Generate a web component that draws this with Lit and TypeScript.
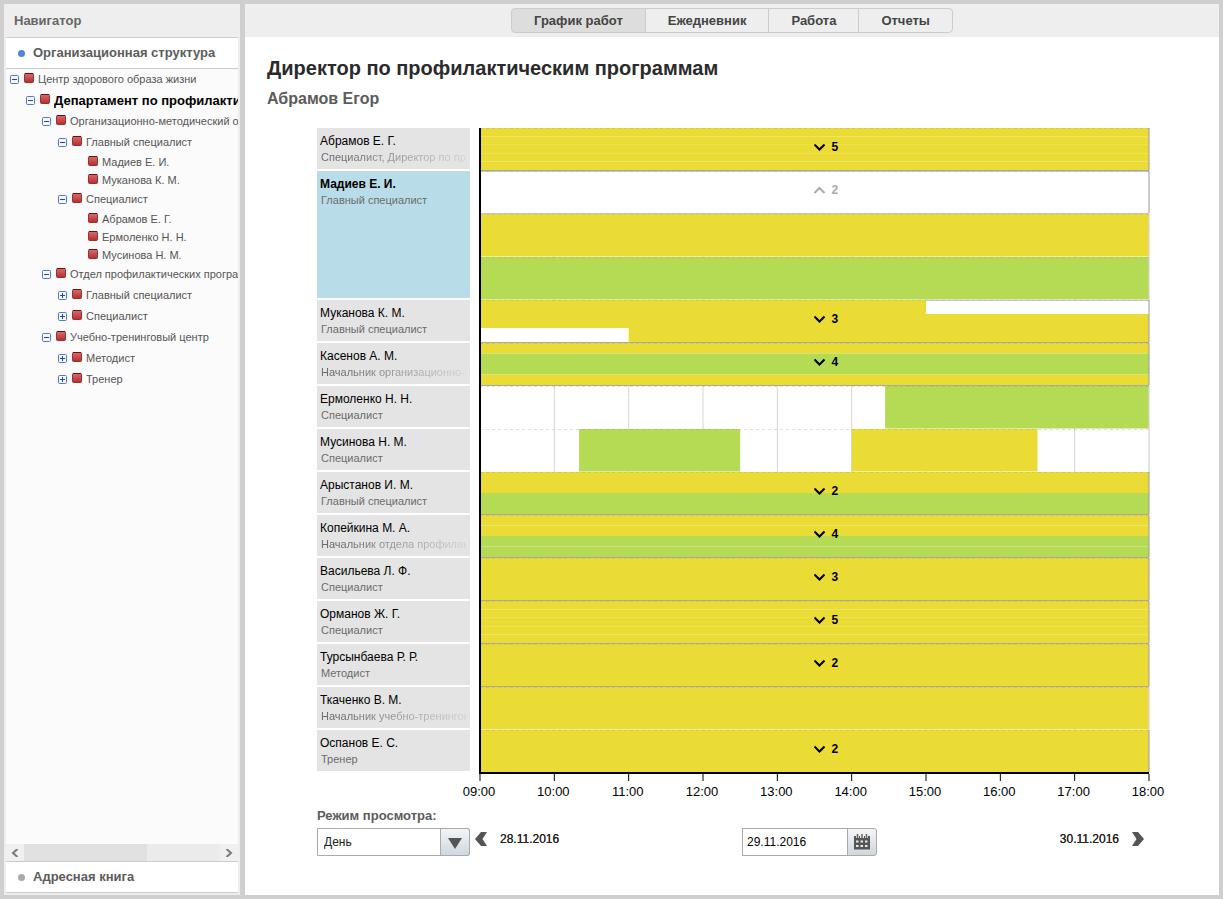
import { LitElement, css, html, svg, nothing } from "lit";
import { customElement } from "lit/decorators.js";
import { classMap } from "lit/directives/class-map.js";

interface TreeNode {
  label: string;
  current?: boolean;
  open?: boolean;
  children?: TreeNode[];
}

type Tone = "yellow" | "green";

interface Work {
  tone: Tone;
  from?: number;
  to?: number;
}

interface Person {
  name: string;
  role: string;
  longRole?: boolean;
  selected?: boolean;
  lanes: Work[][];
}

const DAY_START = 9;
const DAY_END = 18;
const HOURS = DAY_END - DAY_START;
const LANE = 43;

const branch = (label: string, children: TreeNode[] = [], open = true): TreeNode => ({ label, children, open });

const TREE: TreeNode = branch("Центр здорового образа жизни", [
  {
    label: "Департамент по профилактическим программам",
    current: true,
    open: true,
    children: [
      branch("Организационно-методический отдел", [
        branch("Главный специалист", [{ label: "Мадиев Е. И." }, { label: "Муканова К. М." }]),
        branch("Специалист", [{ label: "Абрамов Е. Г." }, { label: "Ермоленко Н. Н." }, { label: "Мусинова Н. М." }]),
      ]),
      branch("Отдел профилактических программ", [
        branch("Главный специалист", [], false),
        branch("Специалист", [], false),
      ]),
      branch("Учебно-тренинговый центр", [branch("Методист", [], false), branch("Тренер", [], false)]),
    ],
  },
]);

const full = (...tones: Tone[]): Work[][] => tones.map((tone) => [{ tone }]);
const y: Tone = "yellow";
const g: Tone = "green";

const PEOPLE: Person[] = [
  { name: "Абрамов Е. Г.", role: "Специалист, Директор по профилактическим программам", longRole: true, lanes: full(y, y, y, y, y) },
  { name: "Мадиев Е. И.", role: "Главный специалист", selected: true, lanes: full(y, g) },
  { name: "Муканова К. М.", role: "Главный специалист", lanes: [[{ tone: y, to: 15 }], [{ tone: y }], [{ tone: y, from: 11 }]] },
  { name: "Касенов А. М.", role: "Начальник организационно-методического отдела", longRole: true, lanes: full(y, g, g, y) },
  { name: "Ермоленко Н. Н.", role: "Специалист", lanes: [[{ tone: g, from: 14.45 }]] },
  { name: "Мусинова Н. М.", role: "Специалист", lanes: [[{ tone: g, from: 10.333, to: 12.5 }, { tone: y, from: 14, to: 16.5 }]] },
  { name: "Арыстанов И. М.", role: "Главный специалист", lanes: full(y, g) },
  { name: "Копейкина М. А.", role: "Начальник отдела профилактических программ", longRole: true, lanes: full(y, y, g, g) },
  { name: "Васильева Л. Ф.", role: "Специалист", lanes: full(y, y, y) },
  { name: "Орманов Ж. Г.", role: "Специалист", lanes: full(y, y, y, y, y) },
  { name: "Турсынбаева Р. Р.", role: "Методист", lanes: full(y, y) },
  { name: "Ткаченко В. М.", role: "Начальник учебно-тренингового центра", longRole: true, lanes: full(y) },
  { name: "Оспанов Е. С.", role: "Тренер", lanes: full(y, y) },
];

const pct = (hour: number) => `${((hour - DAY_START) / HOURS) * 100}%`;
const span = (from: number, to: number) => `${((to - from) / HOURS) * 100}%`;

@customElement("org-navigator")
export class OrgNavigator extends LitElement {
  static styles = css`
    :host {
      display: flex;
      flex-direction: column;
      min-height: 0;
      background: #eee;
      padding: 0 2px 2px;
      font: 11px/18px "Liberation Sans", Arial, sans-serif;
      color: #555;
    }
    .title {
      margin: 0;
      padding-left: 8px;
      font-size: 13px;
      line-height: 33px;
      font-weight: bold;
      color: #666;
    }
    .section {
      display: flex;
      align-items: center;
      gap: 8px;
      box-sizing: border-box;
      height: 32px;
      flex: none;
      width: 100%;
      padding: 0 0 0 12px;
      border: 0;
      border-top: 1px solid #ccc;
      border-bottom: 1px solid #ccc;
      background: #fff;
      font: bold 13px/30px "Liberation Sans", Arial, sans-serif;
      color: #5c5c5c;
      text-align: left;
    }
    .dot {
      width: 7px;
      height: 7px;
      border-radius: 50%;
      background: #aaa;
    }
    .dot.on {
      background: #4d87d6;
    }
    .tree {
      flex: 1;
      min-height: 0;
      overflow: hidden;
      background: #fbfbfb;
    }
    ul {
      margin: 0;
      padding: 0 0 0 16px;
      list-style: none;
    }
    .tree > ul {
      padding-left: 4px;
    }
    .node {
      display: flex;
      align-items: center;
      height: 18px;
      white-space: nowrap;
    }
    .node.parent {
      height: 21px;
    }
    .node.leaf {
      padding-left: 14px;
    }
    .label {
      min-width: 0;
      overflow: hidden;
    }
    .parent .label {
      padding-bottom: 2px;
    }
    .node.current {
      font-size: 13px;
      font-weight: bold;
      color: #000;
    }
    .current .label {
      padding-bottom: 0;
    }
    .toggle {
      display: block;
      width: 9px;
      height: 9px;
      flex: none;
      margin-right: 5px;
      padding: 0;
      border: 0;
      background: none;
    }
    .toggle svg,
    .mark {
      display: block;
    }
    .mark {
      flex: none;
      margin: 0 4px 3px 0;
    }
    .scroll {
      display: flex;
      height: 17px;
      flex: none;
      background: #ebebeb;
    }
    .scroll button {
      display: grid;
      place-items: center;
      width: 18px;
      padding: 0;
      border: 0;
      background: #f0f0f0;
    }
    .track {
      flex: 1;
    }
    .thumb {
      width: 63%;
      height: 100%;
      background: #e1e1e1;
    }
  `;

  private toggle(open: boolean) {
    return html`<button class="toggle" aria-label=${open ? "Свернуть" : "Развернуть"}>
      <svg width="9" height="9" viewBox="0 0 9 9">
        <rect x=".5" y=".5" width="8" height="8" rx="1" fill="#f5f8ff" stroke="#5577cf" />
        <path d=${open ? "M2 4.500h5" : "M2 4.500h5M4.500 2v5"} stroke="#2547b5" />
      </svg>
    </button>`;
  }

  private node(n: TreeNode): unknown {
    const parent = !!n.children;
    return html`<li>
      <div class=${classMap({ node: true, parent, leaf: !parent, current: !!n.current })}>
        ${parent ? this.toggle(!!n.open) : nothing}
        <svg class="mark" width="10" height="10" viewBox="0 0 10 10">
          <defs>
            <linearGradient id="red" x1="0" y1="0" x2="0" y2="1">
              <stop offset="0" stop-color="#dc6b6b" />
              <stop offset="1" stop-color="#b02e30" />
            </linearGradient>
          </defs>
          <rect x=".5" y=".5" width="9" height="9" rx="1" fill="url(#red)" stroke="#9c2f31" />
          <path d="M1 .5h8" stroke="#5a1518" />
        </svg>
        <span class="label">${n.label}</span>
      </div>
      ${n.children?.length ? html`<ul>${n.children.map((c) => this.node(c))}</ul>` : nothing}
    </li>`;
  }

  render() {
    const arrow = (d: string) => html`<svg width="8" height="8" viewBox="0 0 8 8"><path d=${d} fill="none" stroke="#7a7a7a" stroke-width="2" /></svg>`;
    return html`
      <h2 class="title">Навигатор</h2>
      <button class="section"><span class="dot on"></span>Организационная структура</button>
      <nav class="tree"><ul>${this.node(TREE)}</ul></nav>
      <div class="scroll">
        <button aria-label="Влево">${arrow("M6.500 0 2 4l4.500 4")}</button>
        <div class="track"><div class="thumb"></div></div>
        <button aria-label="Вправо">${arrow("M1.500 0 6 4 1.500 8")}</button>
      </div>
      <button class="section"><span class="dot"></span>Адресная книга</button>
    `;
  }
}

@customElement("work-chart")
export class WorkChart extends LitElement {
  static styles = css`
    :host {
      display: block;
      font: 12px/16px "Liberation Sans", Arial, sans-serif;
      color: #000;
    }
    .board {
      display: grid;
      grid-template-columns: 153px 1fr;
      column-gap: 10px;
    }
    .person {
      box-sizing: border-box;
      margin-bottom: 2px;
      padding: 5px 4px 0 3px;
      background: #e4e4e4;
    }
    .person.selected {
      background: #b9dde8;
    }
    .selected .name {
      font-weight: bold;
    }
    .role {
      margin-left: 1px;
      overflow: hidden;
      white-space: nowrap;
      font-size: 11px;
      color: #6c6c6c;
    }
    .role.long {
      -webkit-mask-image: linear-gradient(90deg, #000 10%, rgba(0, 0, 0, 0.12));
      mask-image: linear-gradient(90deg, #000 10%, rgba(0, 0, 0, 0.12));
    }
    .lane {
      display: grid;
      height: 43px;
    }
    .lane > * {
      grid-area: 1 / 1;
    }
    .plot {
      display: block;
      width: 100%;
      height: 43px;
      overflow: visible;
    }
    .yellow {
      fill: #eadb35;
    }
    .green {
      fill: #b5da54;
    }
    .more {
      display: flex;
      align-items: center;
      justify-self: start;
      align-self: start;
      gap: 7px;
      margin: 11px 0 0 calc(50% - 1px);
      padding: 0;
      border: 0;
      background: none;
      font: bold 12px/16px "Liberation Sans", Arial, sans-serif;
      color: #000;
    }
    .more.open {
      color: #aaa;
    }
    .axis {
      grid-column: 2;
      height: 28px;
    }
    .rule {
      display: block;
      width: 100%;
      height: 10px;
      overflow: visible;
    }
    .hours {
      display: flex;
      justify-content: space-between;
      margin: 0 1px 0 -1px;
      font-size: 13px;
      line-height: 18px;
    }
    .hours span {
      display: flex;
      justify-content: center;
      width: 0;
    }
  `;

  private hourLines() {
    return Array.from({ length: HOURS }, (_, i) => {
      const x = pct(DAY_START + i + 1);
      return svg`<line x1=${x} x2=${x} y1="0" y2=${LANE} stroke="#d6d6d6" />`;
    });
  }

  private bars(rows: Work[][]) {
    const h = rows.length > 1 ? (LANE - 1) / rows.length : LANE - 0.5;
    return rows.flatMap((row, i) =>
      row.map(({ tone, from = DAY_START, to = DAY_END }) =>
        svg`<rect class=${tone} x=${pct(from)} y=${i * h} width=${span(from, to)} height=${h} />`));
  }

  private lane(rows: Work[][], grouped: boolean, count?: number, open = false) {
    return html`<div class="lane">
      <svg class="plot">
        ${grouped ? svg`<line x1="0" x2="100%" y1=".5" y2=".5" stroke="#ccc" />` : this.hourLines()}
        ${this.bars(rows)}
        ${grouped
          ? svg`<line x1="0" x2="100%" y1="42.500" y2="42.500" stroke=${open ? "#c4c4c4" : "#a8a8a8"} />
              <line x1="100%" x2="100%" y1="0" y2="42" stroke="#999" />`
          : svg`<line x1="100%" x2="100%" y1="0" y2="42" stroke="#ddd" />`}
        <line x1="0" x2="100%" y1=".5" y2=".5" stroke="#999" stroke-opacity=".3" stroke-dasharray="3 3" />
        <line x1="0" x2="0" y1="0" y2=${LANE} stroke="#000" stroke-width="2" />
      </svg>
      ${count
        ? html`<button class=${classMap({ more: true, open })} aria-expanded=${open}>
            <svg width="11" height="8" viewBox="0 0 11 8">
              <path d=${open ? "M.5 7 5.500 2l5 5" : "M.5 1.500l5 5 5-5"} fill="none" stroke="currentColor" stroke-width="2" />
            </svg>${count}
          </button>`
        : nothing}
    </div>`;
  }

  private person(p: Person) {
    const many = p.lanes.length > 1;
    return html`
      <div class=${classMap({ person: true, selected: !!p.selected })}>
        <div class="name">${p.name}</div>
        <div class=${classMap({ role: true, long: !!p.longRole })}>${p.role}</div>
      </div>
      <div>
        ${p.selected
          ? html`${this.lane([], true, p.lanes.length, true)}${p.lanes.map((l) => this.lane([l], false))}`
          : this.lane(p.lanes, many, many ? p.lanes.length : undefined)}
      </div>
    `;
  }

  render() {
    const hours = Array.from({ length: HOURS + 1 }, (_, i) => DAY_START + i);
    return html`<div class="board">
      ${PEOPLE.map((p) => this.person(p))}
      <div class="axis">
        <svg class="rule">
          <line x1="-1" x2="100%" y1="0" y2="0" stroke="#000" stroke-width="2" />
          ${hours.map((h) => svg`<line x1=${pct(h)} x2=${pct(h)} y1="1" y2="8" stroke="#000" />`)}
        </svg>
        <div class="hours">${hours.map((h) => html`<span>${String(h).padStart(2, "0")}:00</span>`)}</div>
      </div>
    </div>`;
  }
}

@customElement("app-root")
export class AppRoot extends LitElement {
  static styles = css`
    :host {
      display: grid;
      grid-template-columns: 236px 1fr;
      gap: 5px;
      box-sizing: border-box;
      min-height: 100vh;
      padding: 4px;
      background: #cfcfcf;
      font: 12px/16px "Liberation Sans", Arial, sans-serif;
      color: #222;
    }
    main {
      min-width: 0;
      background: #fff;
    }
    .tabs {
      display: flex;
      justify-content: center;
      padding: 4px 0;
      background: #eee;
    }
    .tab {
      box-sizing: border-box;
      height: 25px;
      margin-left: -1px;
      padding: 0 22px;
      border: 1px solid #ccc;
      background: #eee;
      font: bold 13px/22px "Liberation Sans", Arial, sans-serif;
      color: #444;
    }
    .tab:first-child {
      margin-left: 0;
      border-radius: 4px 0 0 4px;
    }
    .tab:last-child {
      border-radius: 0 4px 4px 0;
    }
    .tab.active {
      background: #ddd;
    }
    .page {
      padding: 19px 70px 16px 72px;
    }
    .head {
      margin: 0 0 18px -50px;
    }
    h1 {
      margin: 0 0 8px;
      font-size: 20px;
      line-height: 24px;
      color: #2b2b2b;
    }
    h3 {
      margin: 0;
      font-size: 16px;
      line-height: 22px;
      color: #5c5c5c;
    }
    .mode-label {
      display: block;
      margin: 6px 0 4px;
      font-size: 13px;
      font-weight: bold;
      line-height: 17px;
      color: #5c5c5c;
    }
    .controls {
      display: flex;
      align-items: center;
      gap: 5px;
      padding-right: 5px;
    }
    .field {
      display: flex;
      box-sizing: border-box;
      height: 28px;
    }
    .mode {
      position: relative;
      width: 153px;
    }
    select,
    input {
      box-sizing: border-box;
      margin: 0;
      border: 1px solid #aaa;
      border-radius: 0 3px 3px 0;
      background: #fff;
      font: 12px/16px "Liberation Sans", Arial, sans-serif;
      color: #222;
      appearance: none;
    }
    select {
      width: 100%;
      padding: 0 32px 0 6px;
    }
    input {
      width: 106px;
      padding: 0 4px;
      border-radius: 0;
      color: #000;
    }
    .cap {
      display: grid;
      place-items: center;
      box-sizing: border-box;
      width: 30px;
      padding: 0;
      border: 1px solid #aaa;
      border-radius: 0 3px 3px 0;
      background: linear-gradient(#f3f5f6, #cfd8de);
    }
    .mode .cap {
      position: absolute;
      inset: 0 0 0 auto;
      pointer-events: none;
    }
    .mode .cap svg {
      padding-top: 2px;
    }
    .date .cap {
      margin-left: -1px;
    }
    .pager {
      display: flex;
      flex: 1;
      align-items: center;
      justify-content: space-between;
    }
    .step {
      display: flex;
      align-items: center;
      gap: 12px;
      padding: 0 0 6px;
      border: 0;
      background: none;
      font: 12px/16px "Liberation Sans", Arial, sans-serif;
      color: #222;
      text-shadow: 0 0 0 #222;
    }
  `;

  render() {
    const tabs = ["График работ", "Ежедневник", "Работа", "Отчеты"];
    return html`
      <org-navigator></org-navigator>
      <main>
        <nav class="tabs">
          ${tabs.map((t, i) => html`<button class=${classMap({ tab: true, active: i === 0 })}>${t}</button>`)}
        </nav>
        <div class="page">
          <header class="head">
            <h1>Директор по профилактическим программам</h1>
            <h3>Абрамов Егор</h3>
          </header>
          <work-chart></work-chart>
          <label class="mode-label" for="mode">Режим просмотра:</label>
          <div class="controls">
            <div class="field mode">
              <select id="mode">
                <option>День</option>
                <option>Неделя</option>
                <option>Месяц</option>
              </select>
              <span class="cap">
                <svg width="14" height="11" viewBox="0 0 14 11"><path d="M0 0h14L7 11z" fill="#555" /></svg>
              </span>
            </div>
            <div class="pager">
              <button class="step">
                <svg width="13" height="14" viewBox="0 0 13 14"><path d="M6 0h6L7.500 7l4.500 7H6L0 7z" fill="#555" /></svg>
                28.11.2016
              </button>
              <div class="field date">
                <input aria-label="Дата" value="29.11.2016" />
                <button class="cap" aria-label="Календарь">
                  <svg width="16" height="16" viewBox="0 0 16 16">
                    <path d="M0 2h2v2h3V2h1v2h4V2h1v2h3V2h2v13.500H0z" fill="#555" />
                    <path d="M3.500 0v4M8 0v4M12.500 0v4" stroke="#666" stroke-width="1.500" />
                    <path d="M2 6.500h2.500v2H2zM6.500 6.500H9v2H6.500zM11 6.500h2.500v2H11zM2 11h2.500v2H2zM6.500 11H9v2H6.500zM11 11h2.500v2H11z" fill="#e4e9ec" />
                  </svg>
                </button>
              </div>
              <button class="step">
                30.11.2016
                <svg width="13" height="14" viewBox="0 0 13 14"><path d="M7 0H1l4.500 7L1 14h6l6-7z" fill="#555" /></svg>
              </button>
            </div>
          </div>
        </div>
      </main>
    `;
  }
}
